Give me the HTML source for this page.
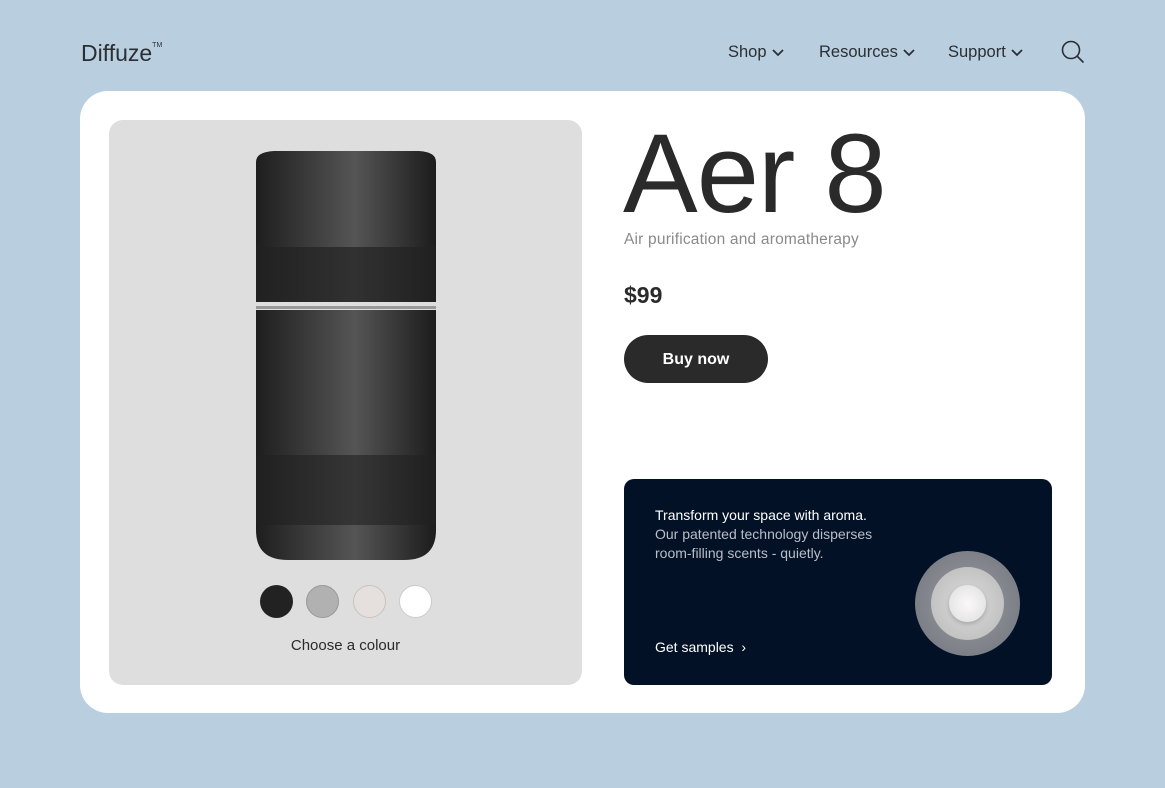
<!DOCTYPE html>
<html><head><style>
*{margin:0;padding:0;box-sizing:border-box}
body{width:1165px;height:788px;background:#b9cfe0;font-family:"Liberation Sans",sans-serif;color:#2a2a2a;position:relative;overflow:hidden}
.logo{position:absolute;left:81px;top:40px;font-size:23px;color:#2b2f33}
.logo sup{font-size:7px;vertical-align:top;position:relative;top:2px}
.nav{position:absolute;top:43px;font-size:16.5px;color:#2b2f33}
.nav svg{vertical-align:middle;margin-left:5px}
.card{position:absolute;left:80px;top:91px;width:1005px;height:622px;background:#fff;border-radius:28px}
.img{position:absolute;left:109px;top:120px;width:473px;height:565px;background:#dedede;border-radius:14px}
.dev{position:absolute;left:254px;top:150px;width:183px;height:412px}
.sw{position:absolute;top:585px;width:33px;height:33px;border-radius:50%}
h1{position:absolute;left:623px;top:109px;font-size:112px;font-weight:400;letter-spacing:-1px;color:#2a2a2a}
.sub{position:absolute;left:624px;top:231px;font-size:15.5px;color:#8a8a8a;letter-spacing:.2px}
.price{position:absolute;left:624px;top:282px;font-size:23px;font-weight:700}
.btn{position:absolute;left:624px;top:335px;width:144px;height:48px;border-radius:24px;background:#2a2a2a;color:#fff;font-size:16px;font-weight:700;text-align:center;line-height:49px}
.dark{position:absolute;left:624px;top:479px;width:428px;height:206px;background:#021126;border-radius:10px;color:#fff}
</style></head><body>
<div class="logo">Diffuze<sup>TM</sup></div>
<div class="nav" style="left:728px">Shop<svg width="12" height="8"><path d="M1 1l5 5 5-5" fill="none" stroke="#2b2f33" stroke-width="1.8"/></svg></div>
<div class="nav" style="left:819px">Resources<svg width="12" height="8"><path d="M1 1l5 5 5-5" fill="none" stroke="#2b2f33" stroke-width="1.8"/></svg></div>
<div class="nav" style="left:948px">Support<svg width="12" height="8"><path d="M1 1l5 5 5-5" fill="none" stroke="#2b2f33" stroke-width="1.8"/></svg></div>
<svg style="position:absolute;left:1061px;top:40px" width="24" height="24"><circle cx="10" cy="10" r="8.5" fill="none" stroke="#2b2f33" stroke-width="1.6"/><path d="M16 16l6.5 6.5" stroke="#2b2f33" stroke-width="1.6"/></svg>
<div class="card"></div>
<div class="img"></div>
<svg class="dev" viewBox="0 0 183 412">
<defs><linearGradient id="g" x1="0" x2="1"><stop offset="0" stop-color="#1e1e1e"/><stop offset=".55" stop-color="#555"/><stop offset="1" stop-color="#1c1c1c"/></linearGradient></defs>
<path d="M2 12Q2 2 20 1H165Q182 2 182 12V152H2Z" fill="url(#g)"/>
<rect x="2" y="97" width="180" height="55" fill="#222" opacity=".7"/>
<rect x="2" y="156" width="180" height="3" fill="#999"/>
<path d="M2 160H182V380Q182 410 150 410H34Q2 410 2 380Z" fill="url(#g)"/>
<rect x="2" y="305" width="180" height="70" fill="#222" opacity=".6"/>
</svg>
<div class="sw" style="left:260px;background:#222"></div>
<div class="sw" style="left:306px;background:#b1b1b1;border:1px solid #999"></div>
<div class="sw" style="left:353px;background:#e5e0dd;border:1px solid #c9c2bd"></div>
<div class="sw" style="left:399px;background:#fff;border:1px solid #ccc"></div>
<div style="position:absolute;left:109px;width:473px;top:637px;text-align:center;font-size:15px">Choose a colour</div>
<h1>Aer 8</h1>
<div class="sub">Air purification and aromatherapy</div>
<div class="price">$99</div>
<div class="btn">Buy now</div>
<div class="dark">
<div style="position:absolute;left:31px;top:27px;font-size:14px;line-height:19px">Transform your space with aroma.<br><span style="color:#b9bec8">Our patented technology disperses<br>room-filling scents - quietly.</span></div>
<div style="position:absolute;left:31px;top:160px;font-size:14px">Get samples &nbsp;›</div>
<div style="position:absolute;left:291px;top:72px;width:105px;height:105px;border-radius:50%;background:radial-gradient(#9a9ca2,#6f737b)"></div>
<div style="position:absolute;left:307px;top:88px;width:73px;height:73px;border-radius:50%;background:radial-gradient(#dcdcdc,#b8b8b8)"></div>
<div style="position:absolute;left:325px;top:106px;width:37px;height:37px;border-radius:50%;background:radial-gradient(#fbf8fa,#dedede);box-shadow:0 2px 4px rgba(0,0,0,.2)"></div>
</div>
</body></html>
